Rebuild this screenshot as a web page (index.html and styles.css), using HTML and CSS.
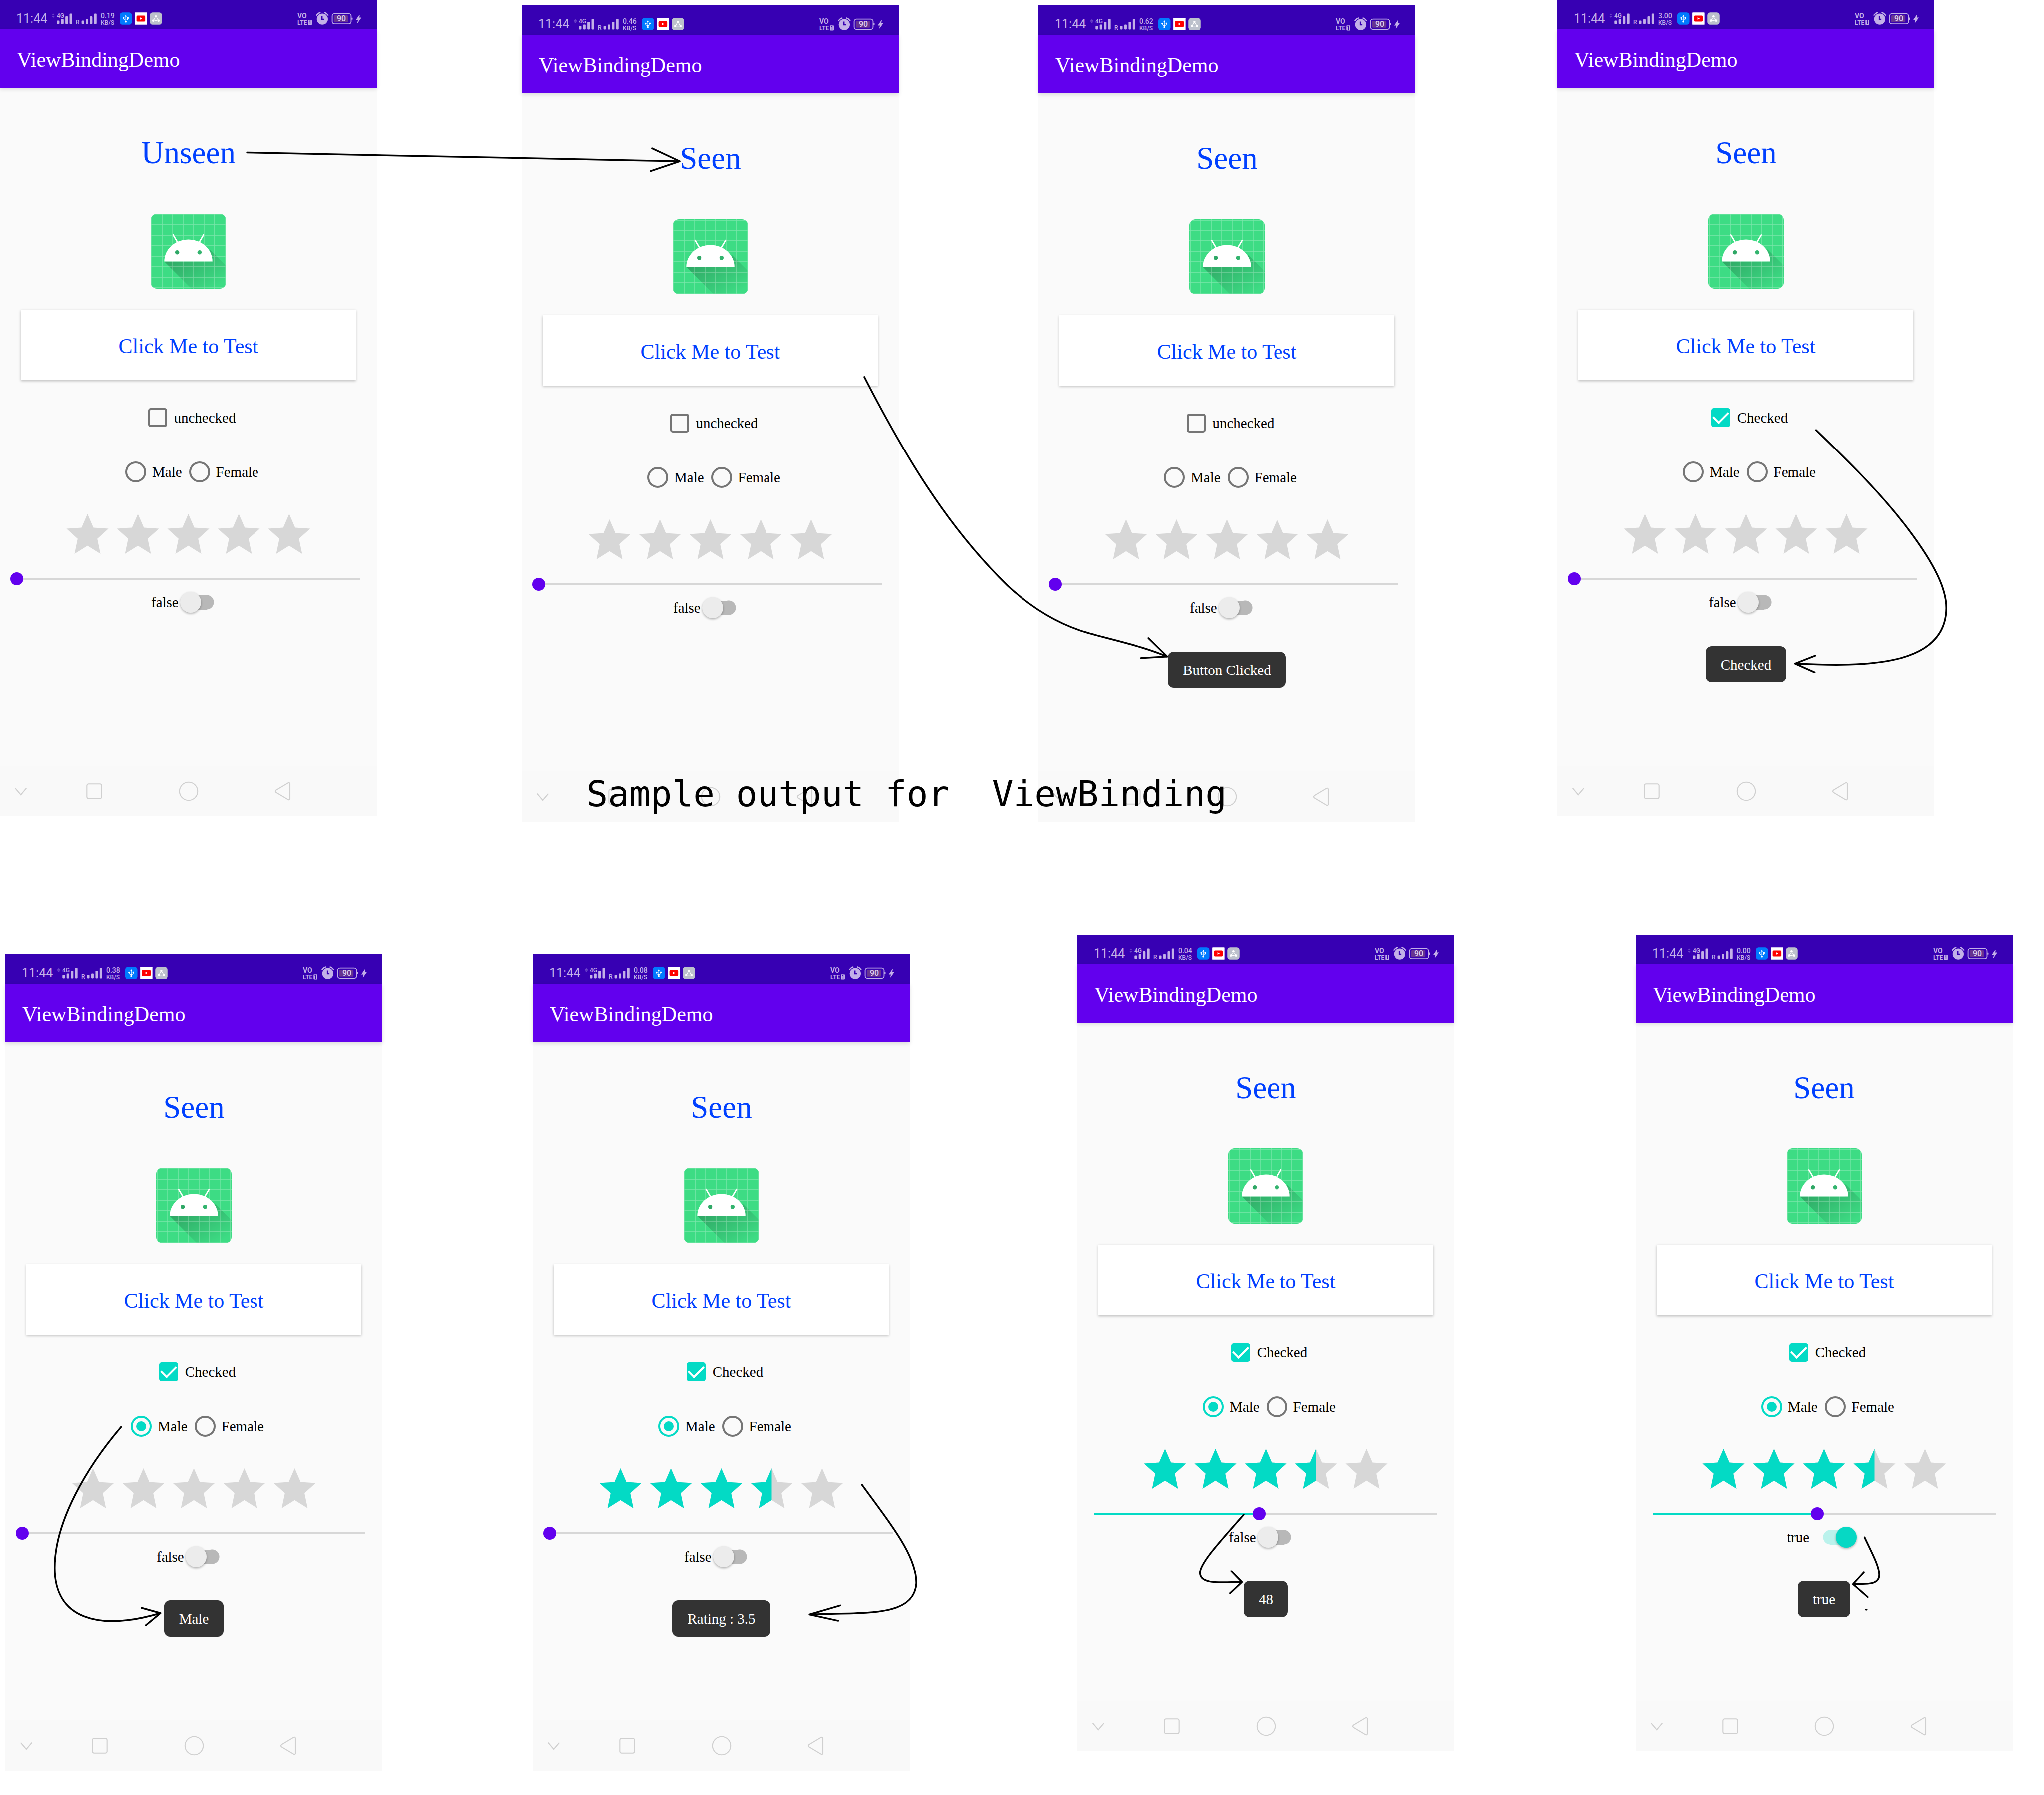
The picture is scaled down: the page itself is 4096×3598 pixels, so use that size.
FILE: index.html
```html
<!DOCTYPE html>
<html lang="en">
<head>
<meta charset="utf-8">
<title>Sample output for ViewBinding</title>
<link rel="stylesheet" href="styles.css">
</head>
<body>
<svg class="sprite" aria-hidden="true">
  <defs>
    <linearGradient id="shade" x1="0.1" y1="0.1" x2="0.9" y2="0.9">
      <stop offset="0" stop-color="#000" stop-opacity="0.26"/>
      <stop offset="1" stop-color="#000" stop-opacity="0"/>
    </linearGradient>
    <clipPath id="tile"><rect width="216" height="216" rx="18"/></clipPath>
  </defs>
  <symbol id="signal" viewBox="357 0 385 192">
    <path fill="#6a40c8" d="M370 57l14 16h-28zM370 94l14-16h-28z"/>
    <g fill="#c3b0e8">
      <rect x="401" y="117" width="22" height="30" rx="6"/><rect x="437" y="105" width="22" height="42" rx="6"/>
      <rect x="473" y="81" width="22" height="66" rx="6"/><rect x="509" y="57" width="22" height="90" rx="6"/>
      <rect x="612" y="117" width="21" height="30" rx="6"/><rect x="648" y="105" width="21" height="42" rx="6"/>
      <rect x="684" y="81" width="21" height="66" rx="6"/><rect x="720" y="57" width="21" height="90" rx="6"/>
    </g>
  </symbol>
  <symbol id="notices" viewBox="939 0 364 192">
    <rect x="939" y="48" width="105" height="105" rx="24" fill="#007bff"/>
    <path d="M991 80v46M973 95v6q0 10 18 13q18-3 18-13v-6" fill="none" stroke="#fff" stroke-width="5"/>
    <path d="M991 68l9 15h-18z" fill="#fff"/><circle cx="973" cy="95" r="7" fill="#fff"/><rect x="1002" y="88" width="14" height="14" rx="3" fill="#fff"/><circle cx="991" cy="127" r="8" fill="#fff"/>
    <rect x="1068" y="48" width="105" height="105" rx="4" fill="#fff"/>
    <rect x="1083" y="75" width="75" height="51" rx="9" fill="#f00"/><path d="M1113 90l19 10-19 11z" fill="#fff"/>
    <rect x="1197" y="48" width="105" height="105" rx="24" fill="#bcc1cc"/>
    <path d="M1242 94l-10 17M1257 94l10 17M1239 118h20" stroke="#fff" stroke-width="6" fill="none"/>
    <circle cx="1249" cy="82" r="10" fill="#fff"/><circle cx="1227" cy="118" r="10" fill="#fff"/><circle cx="1272" cy="118" r="10" fill="#fff"/>
  </symbol>
  <symbol id="power" viewBox="30 0 564 192">
    <g fill="#c3b0e8">
      <rect x="126" y="112" width="33" height="44" rx="5"/>
      <path d="M136 124l8-5v31" fill="none" stroke="#3700b3" stroke-width="6"/>
      <circle cx="249" cy="105" r="48"/>
      <path d="M246 79v28h17" fill="none" stroke="#3700b3" stroke-width="11"/>
      <path d="M200 71q10-16 29-22M298 71q-10-16-29-22" fill="none" stroke="#c3b0e8" stroke-width="11" stroke-linecap="round"/>
      <rect x="334" y="58" width="163" height="88" rx="20" fill="none" stroke="#c3b0e8" stroke-width="8"/>
      <rect x="500" y="92" width="10" height="19" rx="4"/>
      <rect x="348" y="72" width="122" height="60" rx="8" fill="#673490"/>
      <path d="M568 68l-31 45h19l-6 25h4l32-46h-18l4-24z"/>
    </g>
  </symbol>
  <symbol id="droid" viewBox="0 0 216 216">
    <g clip-path="url(#tile)">
      <rect width="216" height="216" fill="#3ddc84"/>
      <path d="M39 138L117 216H216V150L169 103V138z" fill="url(#shade)"/>
      <path d="M3 0v216M33 0v216M63 0v216M93 0v216M123 0v216M153 0v216M183 0v216M213 0v216M0 3h216M0 33h216M0 63h216M0 93h216M0 123h216M0 153h216M0 183h216M0 213h216" stroke="#fff" stroke-opacity="0.32" stroke-width="2"/>
      <path d="M39 138a69 63 0 0 1 138 0z" fill="#fff"/>
      <path d="M64.500 62l13 22M151.500 62l-13 22" stroke="#fff" stroke-width="4" stroke-linecap="round"/>
      <circle cx="76" cy="112" r="6" fill="#2fa866"/><circle cx="140" cy="112" r="6" fill="#33b46e"/>
    </g>
  </symbol>
  <symbol id="stars" viewBox="0 0 720 114">
    <path d="M72 0l17 39 43 3-32 29 9 43-37-23-37 23 9-43-32-29 43-3zM216 0l17 39 43 3-32 29 9 43-37-23-37 23 9-43-32-29 43-3zM360 0l17 39 43 3-32 29 9 43-37-23-37 23 9-43-32-29 43-3zM504 0l17 39 43 3-32 29 9 43-37-23-37 23 9-43-32-29 43-3zM648 0l17 39 43 3-32 29 9 43-37-23-37 23 9-43-32-29 43-3z"/>
  </symbol>
  <symbol id="down" viewBox="0 0 60 60"><path d="M14 21l16 19 16-19"/></symbol>
  <symbol id="recent" viewBox="0 0 60 60"><rect x="9" y="9" width="42" height="42" rx="5"/></symbol>
  <symbol id="home" viewBox="0 0 60 60"><circle cx="30" cy="30" r="26"/></symbol>
  <symbol id="back" viewBox="0 0 60 60"><path d="M50 8v44q-1 4-5 2L10 33q-3-3 0-6L45 6q4-2 5 2z"/></symbol>
</svg>

<main class="board">
  <div class="row row-top">
    <section class="phone">
      <div class="status"><span class="time">11:44</span><span class="signal"><svg><use href="#signal"/></svg><span class="net">4G</span><span class="roam">R</span></span><span class="speed">0.19<small>KB/S</small></span><svg class="notices"><use href="#notices"/></svg><span class="power"><svg><use href="#power"/></svg><span class="vo">VO</span><span class="lte">LTE</span><span class="level">90</span></span></div>
      <header class="appbar">ViewBindingDemo</header>
      <div class="screen">
        <h2>Unseen</h2>
        <svg class="droid" role="img" aria-label="Android"><use href="#droid"/></svg>
        <button class="test" type="button">Click Me to Test</button>
        <label class="option"><input type="checkbox">unchecked</label>
        <div class="radios"><label class="option"><input type="radio" name="g1">Male</label><label class="option"><input type="radio" name="g1">Female</label></div>
        <svg class="rating" role="img" aria-label="Rating 0" viewBox="0 0 720 114"><use href="#stars" width="720" height="114"/></svg>
        <input class="seek" type="range" value="0" aria-label="Progress">
        <label class="switch"><span>false</span><input type="checkbox"></label>
      </div>
      <nav class="keys"><button type="button" aria-label="Hide"><svg><use href="#down"/></svg></button><button type="button" aria-label="Recent"><svg><use href="#recent"/></svg></button><button type="button" aria-label="Home"><svg><use href="#home"/></svg></button><button type="button" aria-label="Back"><svg><use href="#back"/></svg></button></nav>
    </section>

    <section class="phone lowered">
      <div class="status"><span class="time">11:44</span><span class="signal"><svg><use href="#signal"/></svg><span class="net">4G</span><span class="roam">R</span></span><span class="speed">0.46<small>KB/S</small></span><svg class="notices"><use href="#notices"/></svg><span class="power"><svg><use href="#power"/></svg><span class="vo">VO</span><span class="lte">LTE</span><span class="level">90</span></span></div>
      <header class="appbar">ViewBindingDemo</header>
      <div class="screen">
        <h2>Seen</h2>
        <svg class="droid" role="img" aria-label="Android"><use href="#droid"/></svg>
        <button class="test" type="button">Click Me to Test</button>
        <label class="option"><input type="checkbox">unchecked</label>
        <div class="radios"><label class="option"><input type="radio" name="g2">Male</label><label class="option"><input type="radio" name="g2">Female</label></div>
        <svg class="rating" role="img" aria-label="Rating 0" viewBox="0 0 720 114"><use href="#stars" width="720" height="114"/></svg>
        <input class="seek" type="range" value="0" aria-label="Progress">
        <label class="switch"><span>false</span><input type="checkbox"></label>
      </div>
      <nav class="keys"><button type="button" aria-label="Hide"><svg><use href="#down"/></svg></button><button type="button" aria-label="Recent"><svg><use href="#recent"/></svg></button><button type="button" aria-label="Home"><svg><use href="#home"/></svg></button><button type="button" aria-label="Back"><svg><use href="#back"/></svg></button></nav>
    </section>

    <section class="phone lowered">
      <div class="status"><span class="time">11:44</span><span class="signal"><svg><use href="#signal"/></svg><span class="net">4G</span><span class="roam">R</span></span><span class="speed">0.62<small>KB/S</small></span><svg class="notices"><use href="#notices"/></svg><span class="power"><svg><use href="#power"/></svg><span class="vo">VO</span><span class="lte">LTE</span><span class="level">90</span></span></div>
      <header class="appbar">ViewBindingDemo</header>
      <div class="screen">
        <h2>Seen</h2>
        <svg class="droid" role="img" aria-label="Android"><use href="#droid"/></svg>
        <button class="test" type="button">Click Me to Test</button>
        <label class="option"><input type="checkbox">unchecked</label>
        <div class="radios"><label class="option"><input type="radio" name="g3">Male</label><label class="option"><input type="radio" name="g3">Female</label></div>
        <svg class="rating" role="img" aria-label="Rating 0" viewBox="0 0 720 114"><use href="#stars" width="720" height="114"/></svg>
        <input class="seek" type="range" value="0" aria-label="Progress">
        <label class="switch"><span>false</span><input type="checkbox"></label>
        <p class="toast" role="status">Button Clicked</p>
      </div>
      <nav class="keys"><button type="button" aria-label="Hide"><svg><use href="#down"/></svg></button><button type="button" aria-label="Recent"><svg><use href="#recent"/></svg></button><button type="button" aria-label="Home"><svg><use href="#home"/></svg></button><button type="button" aria-label="Back"><svg><use href="#back"/></svg></button></nav>
    </section>

    <section class="phone">
      <div class="status"><span class="time">11:44</span><span class="signal"><svg><use href="#signal"/></svg><span class="net">4G</span><span class="roam">R</span></span><span class="speed">3.00<small>KB/S</small></span><svg class="notices"><use href="#notices"/></svg><span class="power"><svg><use href="#power"/></svg><span class="vo">VO</span><span class="lte">LTE</span><span class="level">90</span></span></div>
      <header class="appbar">ViewBindingDemo</header>
      <div class="screen">
        <h2>Seen</h2>
        <svg class="droid" role="img" aria-label="Android"><use href="#droid"/></svg>
        <button class="test" type="button">Click Me to Test</button>
        <label class="option"><input type="checkbox" checked>Checked</label>
        <div class="radios"><label class="option"><input type="radio" name="g4">Male</label><label class="option"><input type="radio" name="g4">Female</label></div>
        <svg class="rating" role="img" aria-label="Rating 0" viewBox="0 0 720 114"><use href="#stars" width="720" height="114"/></svg>
        <input class="seek" type="range" value="0" aria-label="Progress">
        <label class="switch"><span>false</span><input type="checkbox"></label>
        <p class="toast" role="status">Checked</p>
      </div>
      <nav class="keys"><button type="button" aria-label="Hide"><svg><use href="#down"/></svg></button><button type="button" aria-label="Recent"><svg><use href="#recent"/></svg></button><button type="button" aria-label="Home"><svg><use href="#home"/></svg></button><button type="button" aria-label="Back"><svg><use href="#back"/></svg></button></nav>
    </section>
  </div>

  <div class="row row-bottom">
    <section class="phone dropped">
      <div class="status"><span class="time">11:44</span><span class="signal"><svg><use href="#signal"/></svg><span class="net">4G</span><span class="roam">R</span></span><span class="speed">0.38<small>KB/S</small></span><svg class="notices"><use href="#notices"/></svg><span class="power"><svg><use href="#power"/></svg><span class="vo">VO</span><span class="lte">LTE</span><span class="level">90</span></span></div>
      <header class="appbar">ViewBindingDemo</header>
      <div class="screen">
        <h2>Seen</h2>
        <svg class="droid" role="img" aria-label="Android"><use href="#droid"/></svg>
        <button class="test" type="button">Click Me to Test</button>
        <label class="option"><input type="checkbox" checked>Checked</label>
        <div class="radios"><label class="option"><input type="radio" name="g5" checked>Male</label><label class="option"><input type="radio" name="g5">Female</label></div>
        <svg class="rating" role="img" aria-label="Rating 0" viewBox="0 0 720 114"><use href="#stars" width="720" height="114"/></svg>
        <input class="seek" type="range" value="0" aria-label="Progress">
        <label class="switch"><span>false</span><input type="checkbox"></label>
        <p class="toast" role="status">Male</p>
      </div>
      <nav class="keys"><button type="button" aria-label="Hide"><svg><use href="#down"/></svg></button><button type="button" aria-label="Recent"><svg><use href="#recent"/></svg></button><button type="button" aria-label="Home"><svg><use href="#home"/></svg></button><button type="button" aria-label="Back"><svg><use href="#back"/></svg></button></nav>
    </section>

    <section class="phone dropped">
      <div class="status"><span class="time">11:44</span><span class="signal"><svg><use href="#signal"/></svg><span class="net">4G</span><span class="roam">R</span></span><span class="speed">0.08<small>KB/S</small></span><svg class="notices"><use href="#notices"/></svg><span class="power"><svg><use href="#power"/></svg><span class="vo">VO</span><span class="lte">LTE</span><span class="level">90</span></span></div>
      <header class="appbar">ViewBindingDemo</header>
      <div class="screen">
        <h2>Seen</h2>
        <svg class="droid" role="img" aria-label="Android"><use href="#droid"/></svg>
        <button class="test" type="button">Click Me to Test</button>
        <label class="option"><input type="checkbox" checked>Checked</label>
        <div class="radios"><label class="option"><input type="radio" name="g6" checked>Male</label><label class="option"><input type="radio" name="g6">Female</label></div>
        <svg class="rating" role="img" aria-label="Rating 3.5" viewBox="0 0 720 114"><use href="#stars" width="720" height="114"/><svg class="lit" width="504" height="114"><use href="#stars" width="720" height="114"/></svg></svg>
        <input class="seek" type="range" value="0" aria-label="Progress">
        <label class="switch"><span>false</span><input type="checkbox"></label>
        <p class="toast" role="status">Rating : 3.5</p>
      </div>
      <nav class="keys"><button type="button" aria-label="Hide"><svg><use href="#down"/></svg></button><button type="button" aria-label="Recent"><svg><use href="#recent"/></svg></button><button type="button" aria-label="Home"><svg><use href="#home"/></svg></button><button type="button" aria-label="Back"><svg><use href="#back"/></svg></button></nav>
    </section>

    <section class="phone">
      <div class="status"><span class="time">11:44</span><span class="signal"><svg><use href="#signal"/></svg><span class="net">4G</span><span class="roam">R</span></span><span class="speed">0.04<small>KB/S</small></span><svg class="notices"><use href="#notices"/></svg><span class="power"><svg><use href="#power"/></svg><span class="vo">VO</span><span class="lte">LTE</span><span class="level">90</span></span></div>
      <header class="appbar">ViewBindingDemo</header>
      <div class="screen">
        <h2>Seen</h2>
        <svg class="droid" role="img" aria-label="Android"><use href="#droid"/></svg>
        <button class="test" type="button">Click Me to Test</button>
        <label class="option"><input type="checkbox" checked>Checked</label>
        <div class="radios"><label class="option"><input type="radio" name="g7" checked>Male</label><label class="option"><input type="radio" name="g7">Female</label></div>
        <svg class="rating" role="img" aria-label="Rating 3.5" viewBox="0 0 720 114"><use href="#stars" width="720" height="114"/><svg class="lit" width="504" height="114"><use href="#stars" width="720" height="114"/></svg></svg>
        <input class="seek" type="range" value="48" style="--fill: 48%" aria-label="Progress">
        <label class="switch"><span>false</span><input type="checkbox"></label>
        <p class="toast" role="status">48</p>
      </div>
      <nav class="keys"><button type="button" aria-label="Hide"><svg><use href="#down"/></svg></button><button type="button" aria-label="Recent"><svg><use href="#recent"/></svg></button><button type="button" aria-label="Home"><svg><use href="#home"/></svg></button><button type="button" aria-label="Back"><svg><use href="#back"/></svg></button></nav>
    </section>

    <section class="phone">
      <div class="status"><span class="time">11:44</span><span class="signal"><svg><use href="#signal"/></svg><span class="net">4G</span><span class="roam">R</span></span><span class="speed">0.00<small>KB/S</small></span><svg class="notices"><use href="#notices"/></svg><span class="power"><svg><use href="#power"/></svg><span class="vo">VO</span><span class="lte">LTE</span><span class="level">90</span></span></div>
      <header class="appbar">ViewBindingDemo</header>
      <div class="screen">
        <h2>Seen</h2>
        <svg class="droid" role="img" aria-label="Android"><use href="#droid"/></svg>
        <button class="test" type="button">Click Me to Test</button>
        <label class="option"><input type="checkbox" checked>Checked</label>
        <div class="radios"><label class="option"><input type="radio" name="g8" checked>Male</label><label class="option"><input type="radio" name="g8">Female</label></div>
        <svg class="rating" role="img" aria-label="Rating 3.5" viewBox="0 0 720 114"><use href="#stars" width="720" height="114"/><svg class="lit" width="504" height="114"><use href="#stars" width="720" height="114"/></svg></svg>
        <input class="seek" type="range" value="48" style="--fill: 48%" aria-label="Progress">
        <label class="switch"><span>true</span><input type="checkbox" checked></label>
        <p class="toast" role="status">true</p>
      </div>
      <nav class="keys"><button type="button" aria-label="Hide"><svg><use href="#down"/></svg></button><button type="button" aria-label="Recent"><svg><use href="#recent"/></svg></button><button type="button" aria-label="Home"><svg><use href="#home"/></svg></button><button type="button" aria-label="Back"><svg><use href="#back"/></svg></button></nav>
    </section>
  </div>

  <h1 class="caption">Sample output for  ViewBinding</h1>

  <svg class="arrows" viewBox="0 0 5858 5146" preserveAspectRatio="none" aria-hidden="true">
    <path d="M708 437C1100 444 1500 456 1948 462M1869 425L1948 462L1865 490"/>
    <path d="M2477 1081C2590 1300 2710 1505 2887 1678C2966 1752 3040 1788 3095 1807S3260 1846 3345 1882M3291 1829L3345 1882L3270 1886"/>
    <path d="M5205 1233C5290 1315 5390 1412 5469 1517S5578 1690 5578 1743C5576 1910 5350 1912 5145 1902M5203 1879L5145 1902L5201 1927"/>
    <path d="M347 4091C250 4205 157 4360 157 4495C157 4640 280 4678 460 4625M406 4610L460 4625L418 4660"/>
    <path d="M2470 4256C2560 4380 2626 4460 2626 4539C2620 4640 2470 4622 2320 4629M2408 4603L2320 4629L2402 4647"/>
    <path d="M3564 4342C3500 4415 3439 4480 3439 4509C3439 4545 3500 4536 3559 4536M3528 4504L3559 4536L3525 4568"/>
    <path d="M5344 4407C5362 4446 5386 4488 5386 4515C5386 4542 5360 4542 5311 4542M5342 4508L5311 4542L5353 4579M5348 4615h2"/>
  </svg>
</main>
</body>
</html>
```
FILE: styles.css
```css
* { box-sizing: border-box; }

body {
  margin: 0;
  background: #fff;
  color: #000;
  font-family: "Liberation Serif", "Times New Roman", serif;
  font-size: 29px;
}

button { border: 0; padding: 0; font-family: inherit; }

.sprite { position: absolute; width: 0; height: 0; }

/* Board: two rows of phones, with the notes drawn on top */
.board {
  position: relative;
  display: flex;
  flex-direction: column;
  gap: 227px;
  min-height: 100vh;
}

.row { display: grid; align-items: start; }
.row-top { grid-template-columns: 755fr 291fr 755fr 280fr 755fr 285fr 755fr 220fr; }
.row-bottom { grid-template-columns: 11fr 755fr 302fr 755fr 336fr 755fr 364fr 755fr 63fr; }
.row-top .phone:nth-child(1) { grid-column: 1; }
.row-top .phone:nth-child(2) { grid-column: 3; }
.row-top .phone:nth-child(3) { grid-column: 5; }
.row-top .phone:nth-child(4) { grid-column: 7; }
.row-bottom .phone:nth-child(1) { grid-column: 2; }
.row-bottom .phone:nth-child(2) { grid-column: 4; }
.row-bottom .phone:nth-child(3) { grid-column: 6; }
.row-bottom .phone:nth-child(4) { grid-column: 8; }

.phone {
  display: flex;
  flex-direction: column;
  min-width: 0;
  min-height: 1636px;
  background: #fafafa;
}
.lowered { margin-top: 11px; }
.dropped { margin-top: 39px; }

/* Status bar */
.status {
  display: flex;
  height: 59px;
  padding: 14px 29px 0 33px;
  background: #3700b3;
  color: #c3b0e8;
  font-family: Roboto, sans-serif;
}
.time { width: 71px; font-size: 25px; line-height: 48px; }
.status svg { display: block; flex: none; height: 45px; }
.signal, .power { position: relative; flex: none; }
.signal, .signal svg { width: 90px; }
.power, .power svg { width: 131px; }
.power { margin-left: auto; }
.notices { width: 85px; margin-left: 8px; }
.speed {
  display: flex;
  flex-direction: column;
  width: 30px;
  margin: 10px 0 0 8px;
  font-size: 14px;
  font-weight: 500;
  line-height: 16px;
}
.speed small { font-size: 12px; line-height: 12px; }

/* Lettering that sits on the status icons */
.net, .roam, .vo, .lte, .level {
  position: absolute;
  font-size: 12px;
  font-weight: 500;
  line-height: 12px;
}
.net { top: 12px; left: 10px; }
.roam { top: 25px; left: 48px; }
.vo { top: 11px; left: 1px; font-size: 14px; font-weight: 700; line-height: 14px; }
.lte { top: 26px; left: 1px; font-weight: 700; }
.level { top: 16px; left: 80px; color: #dccdf0; font-size: 16px; line-height: 16px; }

.appbar {
  position: relative;
  height: 117px;
  padding: 6px 34px 0;
  background: #6200ee;
  box-shadow: 0 3px 8px rgba(0, 0, 0, 0.12);
  color: #fff;
  font-size: 42px;
  line-height: 111px;
}

/* Screen content */
.screen {
  display: flex;
  flex: 1;
  flex-direction: column;
  align-items: center;
  padding-top: 94px;
}
h2 {
  margin: 0 0 86px;
  color: #0040ff;
  font-size: 63px;
  font-weight: 400;
  line-height: 72px;
}
.droid { width: 151px; height: 151px; }

.test {
  align-self: stretch;
  height: 141px;
  margin: 42px;
  margin-bottom: 54px;
  padding-top: 4px;
  background: #fff;
  box-shadow: 0 2px 5px rgba(0, 0, 0, 0.24);
  color: #0040ff;
  font-size: 42px;
}

.option {
  display: flex;
  align-items: center;
  gap: 14px;
  height: 42px;
  padding-left: 14px;
}
.radios { display: flex; margin-top: 67px; }
.radios .option { gap: 12px; }

.option input {
  display: grid;
  place-items: center;
  appearance: none;
  width: 38px;
  height: 38px;
  margin: 0;
  border: 4px solid #757575;
  border-radius: 5px;
}
.option input:checked { border-color: #03dac5; }
.option input[type="checkbox"]:checked { background: #03dac5; }
.option input[type="checkbox"]:checked::before {
  width: 26px;
  height: 14px;
  margin-bottom: 8px;
  border: solid #fff;
  border-width: 0 0 4px 4px;
  content: "";
  transform: rotate(-45deg);
}
.option input[type="radio"] { width: 42px; height: 42px; border-radius: 50%; }
.option input[type="radio"]:checked::before {
  width: 20px;
  height: 20px;
  border-radius: 50%;
  background: #03dac5;
  content: "";
}

.rating { width: 505px; height: 80px; margin: 63px 0 37px; fill: #d7d7d7; }
.lit { fill: #03dac5; }

.seek {
  --fill: 0%;
  appearance: none;
  align-self: stretch;
  height: 26px;
  margin: 0 21px 13px;
  background: linear-gradient(90deg, #03dac5 var(--fill), #d7d7d7 var(--fill)) center / calc(100% - 26px) 4px no-repeat;
}
.seek::-webkit-slider-thumb {
  appearance: none;
  width: 26px;
  height: 26px;
  border-radius: 50%;
  background: #6200ee;
}

.switch { display: flex; align-items: center; padding-right: 9px; }
.switch span { width: 58px; }
.switch input {
  display: flex;
  align-items: center;
  appearance: none;
  width: 82px;
  height: 42px;
  margin: 0;
  background:
    radial-gradient(circle at 53px 21px, #b8b8b8 14px, transparent 15px),
    linear-gradient(#b8b8b8, #b8b8b8) center / 24px 29px no-repeat;
}
.switch input::before {
  width: 42px;
  height: 42px;
  border-radius: 50%;
  background: #ececec;
  box-shadow: 0 2px 4px rgba(0, 0, 0, 0.3);
  content: "";
}
.switch input:checked {
  justify-content: flex-end;
  background:
    radial-gradient(circle at 29px 21px, #bbf2ec 14px, transparent 15px),
    linear-gradient(#bbf2ec, #bbf2ec) center / 24px 29px no-repeat;
}
.switch input:checked::before { background: #06d8c4; }

.toast {
  margin: 67px 0 0;
  padding: 2px 30px 0;
  border-radius: 12px;
  background: #333;
  color: #fff;
  line-height: 71px;
}

/* System keys */
.keys {
  display: grid;
  grid-template-columns: 84fr 210fr 168fr 209fr 84fr;
  place-items: center;
  height: 101px;
  background: #f9f9f9;
}
.keys button { display: flex; background: none; }
.keys svg {
  width: 42px;
  height: 42px;
  fill: none;
  stroke: #d0d0d0;
  stroke-width: 3px;
}

/* Notes over the board */
.caption {
  position: absolute;
  top: 1550px;
  left: 28.7%;
  margin: 0;
  font-family: "DejaVu Sans Mono", monospace;
  font-size: 71px;
  font-weight: 400;
  line-height: 84px;
  white-space: pre;
}
.arrows {
  position: absolute;
  inset: 0;
  width: 100%;
  height: 100%;
  fill: none;
  stroke: #000;
  stroke-width: 5;
  stroke-linecap: round;
  stroke-linejoin: round;
  pointer-events: none;
}
```
